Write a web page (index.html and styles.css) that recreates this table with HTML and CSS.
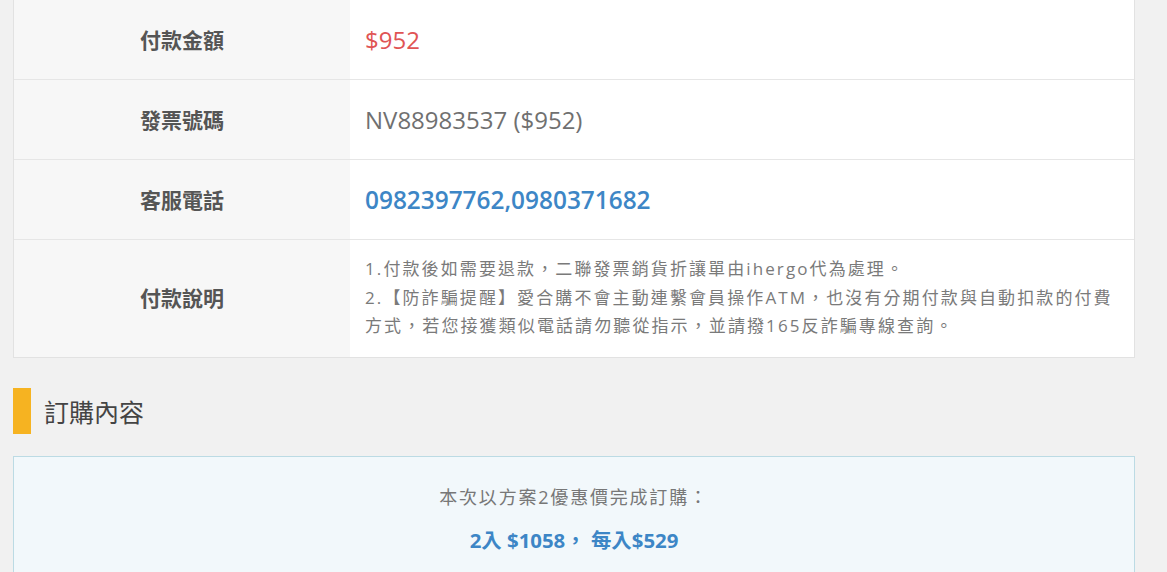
FILE: index.html
```html
<!DOCTYPE html>
<html lang="zh-Hant">
<head>
	<meta charset="UTF-8">
	<title>訂單明細</title>
	<link rel="stylesheet" href="styles.css">
</head>
<body>
	<div class="page">
		<div class="info-table">
			<div class="row">
				<div class="label">付款金額</div>
				<div class="value price">$952</div>
			</div>
			<div class="row">
				<div class="label">發票號碼</div>
				<div class="value">NV88983537 ($952)</div>
			</div>
			<div class="row">
				<div class="label">客服電話</div>
				<div class="value phone">0982397762,0980371682</div>
			</div>
			<div class="row last">
				<div class="label">付款說明</div>
				<div class="value note">
					<p>1.付款後如需要退款，二聯發票銷貨折讓單由ihergo代為處理。</p>
					<p>2.【防詐騙提醒】愛合購不會主動連繫會員操作ATM，也沒有分期付款與自動扣款的付費方式，若您接獲類似電話請勿聽從指示，並請撥165反詐騙專線查詢。</p>
				</div>
			</div>
		</div>

		<h2 class="section-title">訂購內容</h2>

		<div class="order-box">
			<p class="order-plan">本次以方案2優惠價完成訂購：</p>
			<p class="order-price">2入 $1058， 每入$529</p>
		</div>
	</div>
</body>
</html>
```

FILE: styles.css
```css
*{margin: 0;padding: 0;box-sizing: border-box;}
body{
	background: #f1f1f1;
	font-family: "Open Sans", "Noto Sans CJK TC", sans-serif;
	color: #666;
}
.page{
	width: 1122px;
	margin-left: 13px;
}

/*付款資訊表*/
.info-table{
	background: #fff;
	border: 1px solid #e2e2e2;
	border-top: none;
}
.row{
	display: flex;
	min-height: 80px;
	border-bottom: 1px solid #e6e6e6;
}
.row.last{
	border-bottom: none;
}
.label{
	width: 336px;
	flex-shrink: 0;
	background: #f7f7f7;
	display: flex;
	align-items: center;
	justify-content: center;
	padding-bottom: 2px;
	font-size: 21px;
	font-weight: bold;
	color: #555;
}
.value{
	flex: 1;
	display: flex;
	align-items: center;
	padding-left: 15px;
	font-size: 24px;
	color: #707070;
}
.price{
	color: #e05454;
}
.phone{
	color: #3d86c6;
	font-weight: 600;
	font-size: 24.4px;
}
.note{
	display: block;
	padding: 15px 20px 16px 15px;
	font-size: 17px;
	line-height: 28.5px;
	letter-spacing: 2.1px;
	color: #7a7a7a;
}

/*訂購內容*/
.section-title{
	display: flex;
	align-items: center;
	margin-top: 30px;
	height: 46px;
	font-size: 25px;
	font-weight: normal;
	color: #444;
}
.section-title::before{
	content: "";
	width: 18px;
	height: 46px;
	background: #f6b321;
	margin-right: 13px;
}
.order-box{
	margin-top: 22px;
	background: #f2f8fb;
	border: 1px solid #bcdbe4;
	border-bottom: none;
	padding: 25px 0 20px;
	text-align: center;
	height: 130px;
}
.order-plan{
	font-size: 18px;
	line-height: 30px;
	letter-spacing: 1.8px;
	color: #777;
}
.order-price{
	margin-top: 13px;
	font-size: 20.4px;
	line-height: 30px;
	font-weight: bold;
	color: #3d86c6;
}
```
